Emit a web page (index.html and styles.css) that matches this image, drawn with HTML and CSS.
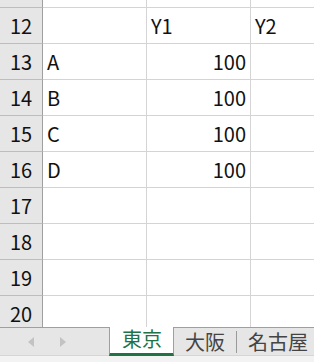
FILE: index.html
```html
<!DOCTYPE html>
<html lang="ja">
<head>
  <meta charset="UTF-8" />
  <title>Sheet</title>
  <link rel="stylesheet" href="styles.css">
</head>
<body>
  <div class="sheet">
    <div class="row top"><div class="hd"></div><div class="c a"></div><div class="c b"></div><div class="c x"></div></div>
    <div class="row"><div class="hd">12</div><div class="c a"></div><div class="c b">Y1</div><div class="c x">Y2</div></div>
    <div class="row"><div class="hd">13</div><div class="c a">A</div><div class="c b num">100</div><div class="c x"></div></div>
    <div class="row"><div class="hd">14</div><div class="c a">B</div><div class="c b num">100</div><div class="c x"></div></div>
    <div class="row"><div class="hd">15</div><div class="c a">C</div><div class="c b num">100</div><div class="c x"></div></div>
    <div class="row"><div class="hd">16</div><div class="c a">D</div><div class="c b num">100</div><div class="c x"></div></div>
    <div class="row"><div class="hd">17</div><div class="c a"></div><div class="c b"></div><div class="c x"></div></div>
    <div class="row"><div class="hd">18</div><div class="c a"></div><div class="c b"></div><div class="c x"></div></div>
    <div class="row"><div class="hd">19</div><div class="c a"></div><div class="c b"></div><div class="c x"></div></div>
    <div class="row"><div class="hd">20</div><div class="c a"></div><div class="c b"></div><div class="c x"></div></div>
  </div>
  <div class="tabbar">
    <div class="nav">
      <span class="arr left"></span>
      <span class="arr right"></span>
    </div>
    <div class="tab active">東京</div>
    <div class="tab">大阪</div>
    <div class="sep"></div>
    <div class="tab">名古屋</div>
  </div>
</body>
</html>
```

FILE: styles.css
```css
:root{--grid:#d4d4d4;--hd:#e6e6e6;--hdline:#9f9f9f;--green:#217346}
*{box-sizing:border-box}
body{margin:0;width:314px;height:362px;overflow:hidden;background:#fff;font-family:"Noto Sans CJK JP","Noto Sans",sans-serif;color:#111}
.sheet{height:327px;overflow:hidden}
.row{display:flex;height:36px;border-bottom:1px solid var(--grid)}
.row.top{height:8px}
.hd{width:43px;flex:none;background:var(--hd);border-right:1px solid var(--hdline);border-bottom:1px solid #bdbdbd;margin-bottom:-1px;display:flex;align-items:center;justify-content:center;font-size:20px;line-height:1}
.c{flex:none;display:flex;align-items:center;font-size:20px;line-height:1;padding:0 4px}
.a{width:104px;border-right:1px solid var(--grid)}
.b{width:104px;border-right:1px solid var(--grid)}
.x{flex:1}
.num{justify-content:flex-end}
.tabbar{height:35px;display:flex;background:var(--hd);border-top:1px solid var(--hdline);position:relative;white-space:nowrap}
.tabbar::after{content:"";position:absolute;left:0;right:0;bottom:0;height:6px;background:#f3f3f3;border-top:1px solid #d6d6d6}
.nav{flex:none;width:109px;display:flex;align-items:center;gap:26px;padding:0 0 6px 28px}
.arr{width:0;height:0;border-top:5px solid transparent;border-bottom:5px solid transparent}
.arr.left{border-right:6px solid #c3c3c3}
.arr.right{border-left:6px solid #c3c3c3}
.tab{flex:none;height:28px;padding:0 11px;display:flex;align-items:center;font-size:20px;line-height:1;color:#444}
.tab.active{position:relative;z-index:1;margin-top:-1px;height:29px;width:65px;background:#fff;color:var(--green);border-left:1px solid var(--hdline);border-right:1px solid var(--hdline);border-bottom:3px solid var(--green);padding:0 0 2px 12px}
.sep{flex:none;width:1px;height:22px;margin-top:3px;background:#9a9a9a}
```
